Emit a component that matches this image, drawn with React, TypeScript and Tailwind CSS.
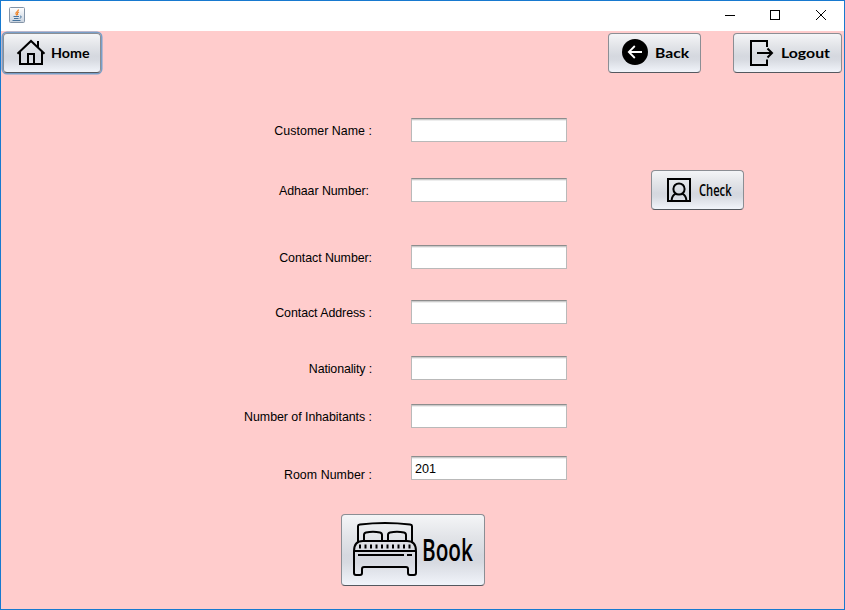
import React from "react";

const buttonBase =
  "relative flex shrink-0 items-center rounded-[4px] border border-[#8b8e94] border-b-[#54585f] bg-[linear-gradient(180deg,#f4f5f7_0%,#e3e5e9_30%,#d5d8df_58%,#d7dae1_68%,#f1f4fa_100%)]";

function JavaIcon() {
  return (
    <svg width="16" height="16" viewBox="0 0 16 16" fill="none">
      <defs>
        <linearGradient id="tile" x1="0" y1="0" x2="0" y2="1">
          <stop offset="0" stopColor="#fff" />
          <stop offset="1" stopColor="#c9d3df" />
        </linearGradient>
      </defs>
      <rect x=".5" y=".5" width="15" height="15" rx="1" fill="url(#tile)" stroke="#8494a7" />
      <path d="M9.5 2.5C9.5 4.5 6 5 7 7L8 8.5M10 5C8 6 8 6.5 9 8" stroke="#ee8226" strokeWidth="1.2" />
      <path d="M4.5 9.5H10M5 11.5H9.5M3.5 13.5H11.5M11 9c2 0 1.5 2-.3 2.2" stroke="#47749e" />
    </svg>
  );
}

function HomeIcon() {
  return (
    <svg width="30" height="28" viewBox="0 0 30 28" fill="none" stroke="#000" strokeWidth="2">
      <path d="M1.5 14.8L15 2L28.5 14.8M22 8V2M4 13V25H26V13M12 25V15H18V25" />
    </svg>
  );
}

function BackIcon() {
  return (
    <svg width="26" height="26" viewBox="0 0 26 26" fill="none">
      <circle cx="13" cy="13" r="13" fill="#000" />
      <path d="M20 13H7M12.8 7L6.8 13L12.8 19" stroke="#fff" strokeWidth="1.8" />
    </svg>
  );
}

function LogoutIcon() {
  return (
    <svg width="24" height="26" viewBox="0 0 24 26" fill="none" stroke="#000" strokeWidth="2">
      <path d="M17 7V1H1V25H17V19.5M7 13H22M17.5 8.5L22 13L17.5 17.5" />
    </svg>
  );
}

function PersonIcon() {
  return (
    <svg width="24" height="24" viewBox="0 0 24 24" fill="none" stroke="#000" strokeWidth="2">
      <rect x="1" y="1" width="22" height="22" />
      <circle cx="12" cy="11" r="5.6" />
      <path d="M4.6 22.5C4.8 18.8 6.4 16.8 8.8 15.6M15.2 15.6C17.6 16.8 19.2 18.8 19.4 22.5" />
    </svg>
  );
}

function BedIcon() {
  return (
    <svg width="64" height="54" viewBox="0 0 64 54" fill="none" stroke="#000" strokeWidth="2" strokeLinejoin="round">
      <path d="M5 20V4Q5 2.8 7 2.5Q32-.5 57 2.5Q59 2.8 59 4V20" />
      <path d="M11 19V13Q11 11 13 10.5Q20 9 27 10.5Q29 11 29 13V19M35 19V13Q35 11 37 10.5Q44 9 51 10.5Q53 11 53 13V19" />
      <path d="M10 19H54Q63 19 63 29V51Q63 53 61 53H57Q55 53 55 51V47Q55 45 53 45H11Q9 45 9 47V51Q9 53 7 53H3Q1 53 1 51V29Q1 19 10 19ZM1 29H63" />
      <path d="M7 22.5V26.5M12.5 22.5V26.5M18 22.5V26.5M23.5 22.5V26.5M29 22.5V26.5M34.5 22.5V26.5M40 22.5V26.5M45.5 22.5V26.5M51 22.5V26.5M56.5 22.5V26.5" />
      <path d="M5 33H51M54 33H59" />
    </svg>
  );
}

interface FieldProps {
  label: string;
  row: string;
  labelClass?: string;
  value?: string;
  children?: React.ReactNode;
}

function Field({ label, row, labelClass = "pt-[5px]", value = "", children }: FieldProps) {
  return (
    <div className={`flex h-6 items-start ${row}`}>
      <label className={`w-[371px] shrink-0 whitespace-pre text-right text-[12.4px] leading-[16px] ${labelClass}`}>
        {label}
      </label>
      <input
        aria-label={label}
        defaultValue={value}
        className="ml-[39px] h-6 w-[156px] shrink-0 border border-[#b9b9b9] border-t-[#8d8d8d] bg-white px-[3px] pt-px text-[12.6px] shadow-[inset_0_1px_0_#cbcbcb,inset_0_2px_0_#ededed] outline-none"
      />
      {children}
    </div>
  );
}

export default function App() {
  return (
    <div className="flex h-[610px] w-[845px] flex-col overflow-hidden border border-[#1779cf] bg-[#ffcccc] font-['Liberation_Sans',Arial,sans-serif] text-black">
      <header className="flex h-[30px] shrink-0 items-start justify-between bg-white pl-2 pt-[6px]">
        <JavaIcon />
        <div className="flex pr-[17px] pt-[3px]">
          <svg width="102" height="11" viewBox="0 0 102 11" fill="none" stroke="#000" shapeRendering="crispEdges">
            <path d="M0 5.5H10" />
            <rect x="45.5" y=".5" width="9" height="9" />
            <path d="M91 0L101 10M101 0L91 10" shapeRendering="auto" />
          </svg>
        </div>
      </header>

      <nav className="flex h-[42px] shrink-0 pl-[2px] pt-[2px] font-[Lato,sans-serif] text-[14px] font-bold">
        <button className={`${buttonBase} h-10 w-[98px] pl-3 shadow-[0_0_0_1.5px_#789fc9]`}>
          <HomeIcon />
          <span className="ml-[5px] block w-[38px] origin-left scale-x-[1.02] pb-[2px] text-left">Home</span>
        </button>
        <button className={`${buttonBase} ml-[507px] h-10 w-[93px] pb-[2px] pl-[13px]`}>
          <BackIcon />
          <span className="ml-[7px] block w-[34px] origin-left scale-x-[1.12] text-left">Back</span>
        </button>
        <button className={`${buttonBase} ml-8 h-10 w-[109px] pl-4`}>
          <LogoutIcon />
          <span className="ml-[7px] block w-[49px] origin-left scale-x-[1.13] pb-[2px] text-left">Logout</span>
        </button>
      </nav>

      <main className="flex flex-col">
        <Field label="Customer Name :" row="mt-[45px]" labelClass="pt-[5px] tracking-[0.04px]" />
        <Field label="Adhaar Number:" row="mt-9" labelClass="pt-[5px] pr-[3px] tracking-[-0.06px]">
          <button className={`${buttonBase} -mt-2 ml-[84px] h-10 w-[93px] pl-[15px]`}>
            <PersonIcon />
            <span className="ml-[8px] block w-[33px] origin-left scale-x-[0.72] pb-px text-left font-['Open_Sans',sans-serif] text-[15.5px] font-semibold leading-5">
              Check
            </span>
          </button>
        </Field>
        <Field label="Contact Number:" row="mt-[43px]" labelClass="pt-[5px] tracking-[-0.06px]" />
        <Field label="Contact Address :" row="mt-[31px]" labelClass="pt-[5px] tracking-[-0.06px]" />
        <Field label="Nationality :" row="mt-8" labelClass="pt-[5px] tracking-[-0.12px]" />
        <Field label="Number of Inhabitants :" row="mt-6" labelClass="pt-[5px] tracking-[-0.04px]" />
        <Field label="Room Number :" row="mt-7" labelClass="pt-[11px] tracking-[0.05px]" value="201" />
        <button className={`${buttonBase} ml-[340px] mt-[34px] h-[72px] w-[144px] pb-[2px] pl-[11px]`}>
          <BedIcon />
          <span className="ml-[5px] block w-[53px] origin-left scale-x-[0.67] text-left font-['Open_Sans',sans-serif] text-[31px] font-semibold leading-9">
            Book
          </span>
        </button>
      </main>
    </div>
  );
}
